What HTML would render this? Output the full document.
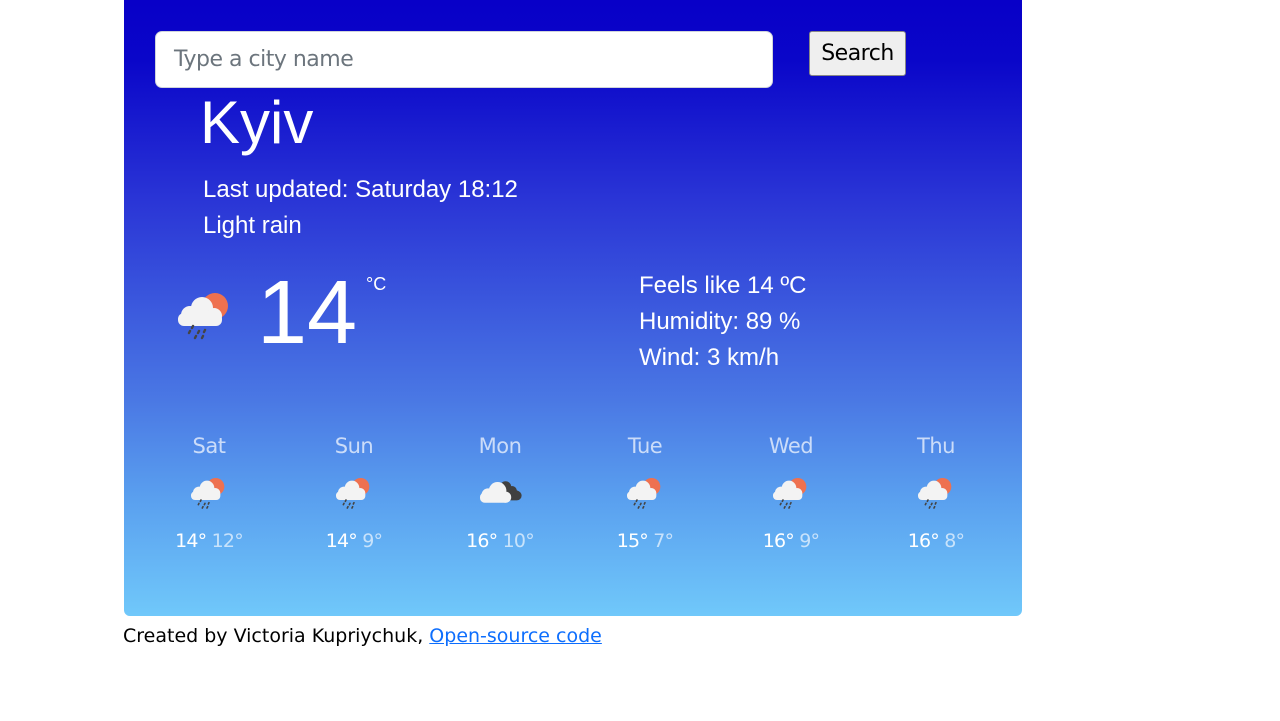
<!DOCTYPE html>
<html><head><meta charset="utf-8"><style>
body{margin:0;background:#fff;font-family:"Liberation Sans",sans-serif;width:1280px;height:721px;position:relative;overflow:hidden}
.card{position:absolute;left:124px;top:0;width:898px;height:616px;border-radius:0 0 6px 6px;background:linear-gradient(180deg,#0800c8 0px,#0a06c9 60px,#2a35d6 200px,#4a78e4 400px,#5aa0ef 500px,#70c8fa 616px);color:#fff}
.abs{position:absolute}
.input{left:31px;top:31px;width:618px;height:57px;background:#fff;border:1px solid #cfd4da;border-radius:7px;box-sizing:border-box}
.input span{position:absolute;left:18px;top:15px;font-family:"DejaVu Sans",sans-serif;font-size:22px;color:#6c757d;letter-spacing:-0.5px}
.btn{left:685px;top:31px;width:97px;height:45px;background:#efefef;border:1px solid #888;border-radius:3px;box-sizing:border-box;color:#000;font-family:"DejaVu Sans",sans-serif;font-size:22px;text-align:center;line-height:44px;letter-spacing:-0.5px}
.day{position:absolute;width:120px;text-align:center;font-family:"DejaVu Sans",sans-serif}
.dn{top:434px;font-size:21px;color:rgba(255,255,255,.7);letter-spacing:-0.5px}
.tp{top:530px;font-size:19px;letter-spacing:-0.8px}
.tp i{font-style:normal;color:rgba(255,255,255,.65)}
.foot{position:absolute;left:123px;top:625px;font-family:"DejaVu Sans",sans-serif;font-size:19px;letter-spacing:0px}
.foot a{color:#0d6efd;text-decoration:underline}
</style></head><body>
<svg width="0" height="0" style="position:absolute"><defs>
<g id="rs">
<circle cx="45" cy="26" r="13" fill="#ee7150"/>
<g fill="#f3f3f3"><circle cx="20" cy="35" r="9"/><circle cx="32" cy="28" r="11"/><circle cx="44" cy="36" r="8"/><rect x="8" y="33" width="44" height="13" rx="6"/></g>
<g stroke="#444" stroke-width="2.4" stroke-linecap="round"><line x1="23" y1="46" x2="22" y2="48"/><line x1="20" y1="51" x2="19" y2="53"/><line x1="29" y1="51" x2="28" y2="53"/><line x1="26" y1="56" x2="25" y2="58"/><line x1="35" y1="50" x2="34" y2="52"/><line x1="33" y1="56" x2="32" y2="58"/></g>
</g>
<g id="cl">
<g fill="#404040"><circle cx="42" cy="26" r="7"/><circle cx="50" cy="31" r="6"/><circle cx="56" cy="37" r="6"/><rect x="38" y="30" width="22" height="13" rx="6"/></g>
<g fill="#f3f3f3"><circle cx="20" cy="36" r="8"/><circle cx="32" cy="31" r="11"/><rect x="10" y="33" width="38" height="13" rx="6"/><circle cx="42" cy="39" r="7"/></g>
</g>
</defs></svg>
<div class="card">
<div class="abs input"><span>Type a city name</span></div>
<div class="abs btn">Search</div>
<div class="abs" style="left:76px;top:88px;font-size:60px">Kyiv</div>
<div class="abs" style="left:79px;top:172px;font-size:24px;line-height:36px">Last updated: Saturday 18:12<br>Light rain</div>
<svg class="abs" style="left:46px;top:280px" width="70" height="70" viewBox="0 0 70 70"><use href="#rs"/></svg>
<div class="abs" style="left:133px;top:262px;font-size:90px">14</div>
<div class="abs" style="left:242px;top:274px;font-size:18px">°C</div>
<div class="abs" style="left:515px;top:268px;font-size:24px;line-height:36px">Feels like 14 ºC<br>Humidity: 89 %<br>Wind: 3 km/h</div>

<div class="day dn" style="left:25px">Sat</div>
<div class="day dn" style="left:170px">Sun</div>
<div class="day dn" style="left:316px">Mon</div>
<div class="day dn" style="left:461px">Tue</div>
<div class="day dn" style="left:607px">Wed</div>
<div class="day dn" style="left:752px">Thu</div>

<svg class="abs" style="left:65px;top:476px" width="40" height="40" viewBox="5 10 60 60"><use href="#rs"/></svg>
<svg class="abs" style="left:210px;top:476px" width="40" height="40" viewBox="5 10 60 60"><use href="#rs"/></svg>
<svg class="abs" style="left:352px;top:474px" width="48" height="48" viewBox="5 10 60 60"><use href="#cl"/></svg>
<svg class="abs" style="left:501px;top:476px" width="40" height="40" viewBox="5 10 60 60"><use href="#rs"/></svg>
<svg class="abs" style="left:647px;top:476px" width="40" height="40" viewBox="5 10 60 60"><use href="#rs"/></svg>
<svg class="abs" style="left:792px;top:476px" width="40" height="40" viewBox="5 10 60 60"><use href="#rs"/></svg>

<div class="day tp" style="left:25px">14° <i>12°</i></div>
<div class="day tp" style="left:170px">14° <i>9°</i></div>
<div class="day tp" style="left:316px">16° <i>10°</i></div>
<div class="day tp" style="left:461px">15° <i>7°</i></div>
<div class="day tp" style="left:607px">16° <i>9°</i></div>
<div class="day tp" style="left:752px">16° <i>8°</i></div>
</div>
<div class="foot">Created by Victoria Kupriychuk, <a>Open-source code</a></div>
</body></html>
